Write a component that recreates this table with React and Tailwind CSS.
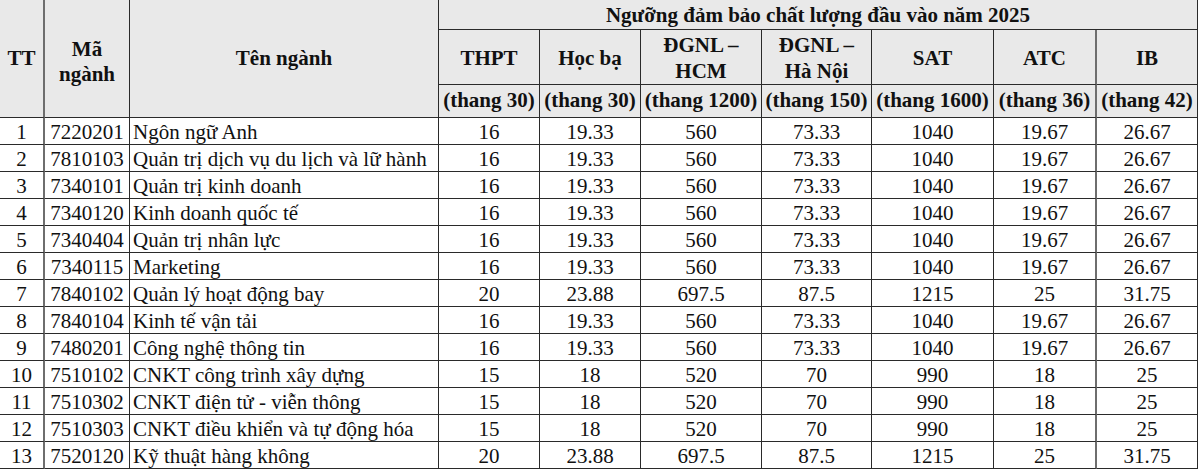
import React from "react";

const rows = [
  ["1", "7220201", "Ngôn ngữ Anh", "16", "19.33", "560", "73.33", "1040", "19.67", "26.67"],
  ["2", "7810103", "Quản trị dịch vụ du lịch và lữ hành", "16", "19.33", "560", "73.33", "1040", "19.67", "26.67"],
  ["3", "7340101", "Quản trị kinh doanh", "16", "19.33", "560", "73.33", "1040", "19.67", "26.67"],
  ["4", "7340120", "Kinh doanh quốc tế", "16", "19.33", "560", "73.33", "1040", "19.67", "26.67"],
  ["5", "7340404", "Quản trị nhân lực", "16", "19.33", "560", "73.33", "1040", "19.67", "26.67"],
  ["6", "7340115", "Marketing", "16", "19.33", "560", "73.33", "1040", "19.67", "26.67"],
  ["7", "7840102", "Quản lý hoạt động bay", "20", "23.88", "697.5", "87.5", "1215", "25", "31.75"],
  ["8", "7840104", "Kinh tế vận tải", "16", "19.33", "560", "73.33", "1040", "19.67", "26.67"],
  ["9", "7480201", "Công nghệ thông tin", "16", "19.33", "560", "73.33", "1040", "19.67", "26.67"],
  ["10", "7510102", "CNKT công trình xây dựng", "15", "18", "520", "70", "990", "18", "25"],
  ["11", "7510302", "CNKT điện tử - viễn thông", "15", "18", "520", "70", "990", "18", "25"],
  ["12", "7510303", "CNKT điều khiển và tự động hóa", "15", "18", "520", "70", "990", "18", "25"],
  ["13", "7520120", "Kỹ thuật hàng không", "20", "23.88", "697.5", "87.5", "1215", "25", "31.75"],
];

const subHeads = [
  ["THPT"],
  ["Học bạ"],
  ["ĐGNL –", "HCM"],
  ["ĐGNL –", "Hà Nội"],
  ["SAT"],
  ["ATC"],
  ["IB"],
];
const scales = ["(thang 30)", "(thang 30)", "(thang 1200)", "(thang 150)", "(thang 1600)", "(thang 36)", "(thang 42)"];

const rb = (i) =>
  i === 0
    ? "border-r-2 border-r-[#6e6e6e]"
    : i === 8
    ? "border-r-2 border-r-[#6e6e6e]"
    : "border-r border-r-[#2a2a2a]";

export default function App() {
  return (
    <div className="w-[1200px] h-[472px] bg-white text-[#111111] overflow-hidden font-['Liberation_Serif','Times_New_Roman',serif]">
      <div className="grid grid-cols-[45px_85px_309px_101px_101px_121px_110px_122px_103px_101px] grid-rows-[30px_55px_33px_repeat(13,27px)] w-[1198px]">
        {/* Header */}
        <div className="row-span-3 bg-[#e9e9e9] border-b border-b-[#2a2a2a] border-r-2 border-r-[#6e6e6e] flex items-center justify-center font-bold text-[21px]">
          TT
        </div>
        <div className="row-span-3 bg-[#e9e9e9] border-b border-b-[#2a2a2a] border-r border-r-[#2a2a2a] flex flex-col items-center justify-center font-bold text-[21px] leading-[25px] pt-[6px]">
          <span>Mã</span>
          <span>ngành</span>
        </div>
        <div className="row-span-3 bg-[#e9e9e9] border-b border-b-[#2a2a2a] border-r border-r-[#2a2a2a] flex items-center justify-center font-bold text-[21px]">
          Tên ngành
        </div>
        <div className="col-span-7 bg-[#e9e9e9] border-b border-b-[#2a2a2a] border-r border-r-[#2a2a2a] flex items-center justify-center font-bold text-[21px] pt-[2px]">
          Ngưỡng đảm bảo chất lượng đầu vào năm 2025
        </div>
        {subHeads.map((h, i) => (
          <div
            key={"sh" + i}
            className={`bg-[#e9e9e9] border-b border-b-[#2a2a2a] ${rb(i + 3)} flex flex-col items-center justify-center font-bold text-[21px] leading-[26px] pt-[2px]`}
          >
            {h.map((t, j) => (
              <span key={j}>{t}</span>
            ))}
          </div>
        ))}
        {scales.map((s, i) => (
          <div
            key={"sc" + i}
            className={`bg-[#e9e9e9] border-b border-b-[#2a2a2a] ${rb(i + 3)} flex items-center justify-center font-bold text-[21px] whitespace-nowrap`}
          >
            {s}
          </div>
        ))}
        {/* Body */}
        {rows.map((r, ri) =>
          r.map((c, ci) => (
            <div
              key={ri + "-" + ci}
              className={`bg-white border-b border-b-[#2a2a2a] ${rb(ci)} flex items-center pt-[2px] text-[21px] leading-none whitespace-nowrap ${
                ci === 2 ? "justify-start pl-[3px]" : "justify-center"
              }`}
            >
              {c}
            </div>
          ))
        )}
      </div>
    </div>
  );
}
